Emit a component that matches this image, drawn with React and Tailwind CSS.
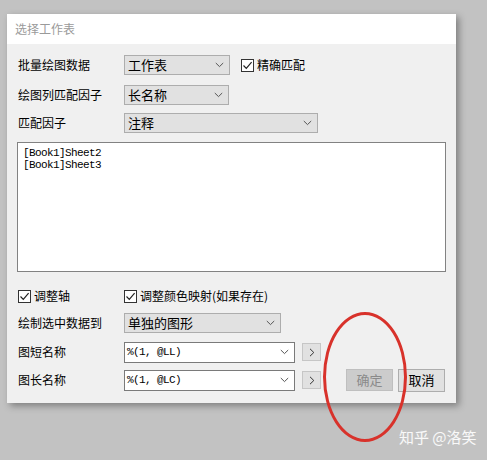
import React from "react";

const font = { fontFamily: '"Noto Sans CJK SC", "Noto Sans", sans-serif' };

const Chevron = ({ className = "" }) => (
  <svg width="9" height="6" viewBox="0 0 9 6" className={className}>
    <path d="M0.8 1 L4.5 4.6 L8.2 1" fill="none" stroke="#555" strokeWidth="1" />
  </svg>
);

const Check = ({ label, className = "" }) => (
  <label className={`flex items-center gap-[3px] ${className}`}>
    <span className="grid h-[13px] w-[13px] place-items-center border border-[#333] bg-white">
      <svg width="11" height="11" viewBox="0 0 11 11">
        <path d="M1.5 5.5 L4.3 8.3 L9.6 2.2" fill="none" stroke="#222" strokeWidth="1.2" />
      </svg>
    </span>
    <span>{label}</span>
  </label>
);

const Combo = ({ value, width, h = "h-[20px]" }) => (
  <div
    className={`flex ${h} items-center justify-between border border-[#adadad] bg-[#e1e1e1] pl-[3px] pr-[5px]`}
    style={{ width }}
  >
    <span className="text-[13px]">{value}</span>
    <Chevron />
  </div>
);

const EditCombo = ({ value }) => (
  <div className="flex h-[21px] w-[171px] items-center justify-between border border-[#7a7a7a] bg-white pl-[2px] pr-[5px]">
    <span className="font-['Liberation_Mono',monospace] text-[11px] tracking-[-0.6px] text-black">{value}</span>
    <Chevron />
  </div>
);

const Arrow = () => (
  <div className="ml-[7px] grid h-[18px] w-[19px] place-items-center border border-[#c6c6c6] bg-[#e1e1e1]">
    <svg width="6" height="9" viewBox="0 0 6 9">
      <path d="M1 0.8 L4.8 4.5 L1 8.2" fill="none" stroke="#333" strokeWidth="1" />
    </svg>
  </div>
);

const Label = ({ children }) => <div className="w-[107px] shrink-0 pl-[1px]">{children}</div>;

export default function App() {
  return (
    <div className="relative h-[460px] w-[487px] overflow-hidden bg-[#c2c2c2] pt-[14px] text-[12px] text-black" style={font}>
      <div className="ml-[7px] h-[389px] w-[449px] bg-[#f0f0f0] shadow-[3px_3px_7px_rgba(0,0,0,0.35)]">
        <div className="flex h-[30px] items-center bg-white pl-[8px] text-[#9a9a9a]">选择工作表</div>

        <div className="pl-[10px]">
          <div className="mt-[11px] flex h-[20px] items-center">
            <Label>批量绘图数据</Label>
            <Combo value="工作表" width="106px" />
            <Check label="精确匹配" className="ml-[11px]" />
          </div>

          <div className="mt-[10px] flex h-[20px] items-center">
            <Label>绘图列匹配因子</Label>
            <Combo value="长名称" width="105px" />
          </div>

          <div className="mt-[8px] flex h-[20px] items-center">
            <Label>匹配因子</Label>
            <Combo value="注释" width="194px" />
          </div>

          <div className="mt-[9px] h-[130px] w-[429px] border border-[#828282] bg-white px-[5px] pt-[4px] font-['Liberation_Mono',monospace] text-[11px] leading-[12px] tracking-[-0.6px]">
            <div>[Book1]Sheet2</div>
            <div>[Book1]Sheet3</div>
          </div>

          <div className="mt-[16px] flex h-[16px] items-center">
            <Check label="调整轴" className="w-[107px] pl-[1px]" />
            <Check label="调整颜色映射(如果存在)" />
          </div>

          <div className="mt-[9px] flex h-[20px] items-center">
            <Label>绘制选中数据到</Label>
            <Combo value="单独的图形" width="157px" />
          </div>

          <div className="mt-[8px] flex h-[22px] items-center">
            <Label>图短名称</Label>
            <EditCombo value="%(1, @LL)" />
            <Arrow />
          </div>

          <div className="mt-[6px] flex h-[22px] items-center">
            <Label>图长名称</Label>
            <EditCombo value="%(1, @LC)" />
            <Arrow />
            <button className="ml-[25px] h-[22px] w-[47px] border border-[#bfbfbf] bg-[#cccccc] text-[13px] text-[#8a8a8a]">确定</button>
            <button className="ml-[5px] h-[23px] w-[47px] border border-[#adadad] bg-[#e1e1e1] text-[13px] text-black">取消</button>
          </div>
        </div>
      </div>

      <div className="pointer-events-none absolute left-[323px] top-[312px] h-[130px] w-[84px] rounded-[50%] border-[3px] border-[#d8322b]" />
      <div className="absolute left-[399px] top-[426px] text-[15px] text-white/90">知乎 @洛笑</div>
    </div>
  );
}
